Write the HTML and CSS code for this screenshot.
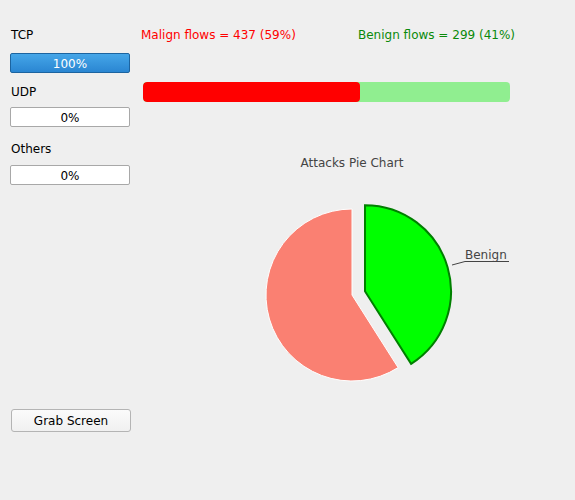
FILE: index.html
```html
<!DOCTYPE html>
<html>
<head>
<meta charset="utf-8">
<link rel="stylesheet" href="styles.css">
</head>
<body>
<div class="window">
  <div class="side">
    <div class="label first">TCP</div>
    <div class="pbar full">100%</div>
    <div class="label l2">UDP</div>
    <div class="pbar">0%</div>
    <div class="label l3">Others</div>
    <div class="pbar">0%</div>
    <button class="grab">Grab Screen</button>
  </div>
  <div class="main">
    <div class="flows">
      <span class="malign">Malign flows = 437 (59%)</span>
      <span class="benign">Benign flows = 299 (41%)</span>
    </div>
    <div class="ratio">
      <div class="ratio-red" style="width:59%"></div>
    </div>
    <svg class="chart" width="440" height="300" viewBox="0 0 440 300">
      <text class="title" x="217" y="56.5" text-anchor="middle">Attacks Pie Chart</text>
      <path d="M217 185 L263.1 257.6 A86 86 0 1 1 217 99 Z" fill="#fa8072" stroke="#ffffff" stroke-width="1"/>
      <path d="M230 181.2 L230 95.2 A86 86 0 0 1 276.1 253.8 Z" fill="#00ff00" stroke="#008000" stroke-width="2" stroke-linejoin="miter"/>
      <polyline points="317,155 330,151.5 374,151.5" fill="none" stroke="#444" stroke-width="1"/>
      <text class="slabel" x="330" y="148.5">Benign</text>
    </svg>
  </div>
</div>
</body>
</html>
```
FILE: styles.css
```css
html, body {
  margin: 0;
  padding: 0;
  background: #efefef;
}
body {
  font-family: "DejaVu Sans", sans-serif;
  font-size: 12px;
  color: #000;
}
.window {
  display: flex;
  width: 575px;
  height: 500px;
}
.side {
  width: 125px;
  padding-left: 10px;
  display: flex;
  flex-direction: column;
}
.label {
  line-height: 14px;
  padding-left: 1px;
  padding-top: 1px;
}
.label.first { margin-top: 27px; }
.label.l2 { margin-top: 11px; }
.label.l3 { margin-top: 14px; }
.pbar {
  box-sizing: border-box;
  width: 120px;
  height: 20px;
  margin-top: 11px;
  background: #fff;
  border: 1px solid #a8a8a8;
  border-radius: 2px;
  text-align: center;
  line-height: 20px;
  overflow: hidden;
}
.label.l2 + .pbar { margin-top: 8px; }
.label.l3 + .pbar { margin-top: 9px; }
.pbar.full {
  background: linear-gradient(#45a6e8, #2a86d2);
  border-color: #1c64a0;
  color: #fff;
}
.grab {
  box-sizing: border-box;
  width: 120px;
  height: 23px;
  margin-top: 224px;
  margin-left: 1px;
  font-family: "DejaVu Sans", sans-serif;
  font-size: 12px;
  color: #000;
  background: linear-gradient(#fbfbfb, #f0f0f0);
  border: 1px solid #b4b4b4;
  border-radius: 3px;
  padding: 0;
}
.main {
  flex: 1;
  display: flex;
  flex-direction: column;
}
.flows {
  margin-top: 28px;
  padding-left: 6px;
  line-height: 14px;
  display: flex;
}
.malign {
  color: #ff0000;
  width: 217px;
}
.benign {
  color: #0a8a0a;
}
.ratio {
  margin-top: 40px;
  margin-left: 8px;
  width: 367px;
  height: 20px;
  background: #90ee90;
  border-radius: 4px;
  overflow: hidden;
}
.ratio-red {
  height: 100%;
  background: #ff0000;
  border-radius: 4px;
}
.chart {
  display: block;
  margin-top: 8px;
}
.title, .slabel {
  font-family: "DejaVu Sans", sans-serif;
  font-size: 12px;
  fill: #444;
}
```
